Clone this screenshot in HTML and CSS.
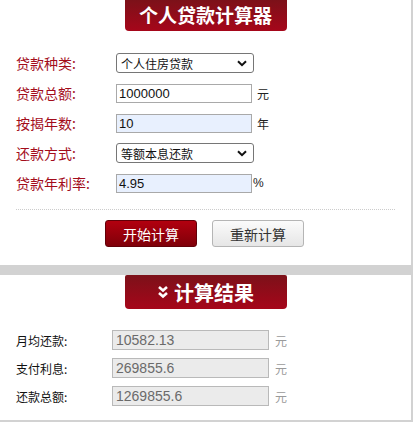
FILE: index.html
```html
<!DOCTYPE html>
<html lang="zh-CN">
<head>
  <meta charset="UTF-8" />
  <title>个人贷款计算器</title>
  <link rel="stylesheet" href="styles.css">
</head>
<body>
  <div class="panel calc">
    <div class="banner banner-top">个人贷款计算器</div>
    <div class="form">
      <div class="row">
        <label>贷款种类:</label>
        <div class="select-wrap">
          <select><option>个人住房贷款</option></select>
          <svg class="chev" viewBox="0 0 10 7" width="10" height="7"><path d="M1 1.2 5 5.2 9 1.2" fill="none" stroke="#111" stroke-width="2"/></svg>
        </div>
      </div>
      <div class="row">
        <label>贷款总额:</label>
        <input class="field" type="text" value="1000000">
        <span class="unit">元</span>
      </div>
      <div class="row">
        <label>按揭年数:</label>
        <input class="field filled" type="text" value="10">
        <span class="unit">年</span>
      </div>
      <div class="row">
        <label>还款方式:</label>
        <div class="select-wrap">
          <select><option>等额本息还款</option></select>
          <svg class="chev" viewBox="0 0 10 7" width="10" height="7"><path d="M1 1.2 5 5.2 9 1.2" fill="none" stroke="#111" stroke-width="2"/></svg>
        </div>
      </div>
      <div class="row">
        <label>贷款年利率:</label>
        <input class="field filled" type="text" value="4.95">
        <span class="unit pct">%</span>
      </div>
    </div>
    <div class="actions">
      <button class="btn btn-red">开始计算</button>
      <button class="btn btn-gray">重新计算</button>
    </div>
  </div>

  <div class="panel result">
    <div class="banner banner-result">
      <svg class="dchev" viewBox="0 0 12 14" width="12" height="14"><path d="M2 2 6 5.5 10 2M2 8 6 11.5 10 8" fill="none" stroke="#fff" stroke-width="2.6"/></svg>计算结果
    </div>
    <div class="out">
      <div class="out-row">
        <span class="out-label">月均还款:</span>
        <input class="out-field" type="text" value="10582.13" readonly>
        <span class="out-unit">元</span>
      </div>
      <div class="out-row">
        <span class="out-label">支付利息:</span>
        <input class="out-field" type="text" value="269855.6" readonly>
        <span class="out-unit">元</span>
      </div>
      <div class="out-row">
        <span class="out-label">还款总额:</span>
        <input class="out-field" type="text" value="1269855.6" readonly>
        <span class="out-unit">元</span>
      </div>
    </div>
  </div>
</body>
</html>
```

FILE: styles.css
```css
:root {
  --red: #a30d1b;
  --dark-red: #8a0b14;
  --band: #d2d2d2;
}
* { box-sizing: border-box; }
html, body {
  margin: 0; padding: 0;
  background: var(--band);
  font-family: "Liberation Sans", "Noto Sans CJK SC", sans-serif;
}
body { width: 413px; height: 422px; overflow: hidden; }
.panel {
  background: #fff;
  width: 411px;
}
.calc { height: 265px; margin-bottom: 10px; }
.result { height: 145px; }

.banner {
  width: 162px; margin: 0 auto;
  background: linear-gradient(#7c1119, #a6061a);
  color: #fff; font-weight: bold;
  font-family: "Noto Sans CJK SC", sans-serif;
  text-align: center;
  border-radius: 0 0 4px 4px;
  display: flex; justify-content: center; align-items: center;
}
.banner-top { height: 31px; padding-bottom: 2px; font-size: 19px; }
.banner-result { height: 34px; gap: 5px; font-size: 20px; border-radius: 2px 2px 4px 4px; }

.form {
  padding: 22px 0 0 16px;
  display: flex; flex-direction: column; gap: 10px;
}
.row {
  display: flex; align-items: center; height: 20px;
}
.row label {
  width: 100px;
  color: var(--red); font-size: 14px;
  font-family: "Noto Sans CJK SC", sans-serif;
}
.select-wrap { position: relative; width: 138px; height: 20px; }
.select-wrap select {
  appearance: none; -webkit-appearance: none;
  width: 100%; height: 100%;
  border: 1px solid #767676; border-radius: 3px;
  background: #fff; color: #111;
  font-size: 12px; padding: 0 4px;
  font-family: "Noto Sans CJK SC", sans-serif;
}
.chev { position: absolute; right: 7px; top: 7px; pointer-events: none; }
.field {
  width: 136px; height: 19px;
  border: 1px solid #a9a9a9; border-radius: 0;
  padding: 0 2px; font-size: 13px; color: #111;
  font-family: "Liberation Sans", sans-serif;
  background: #fff;
}
.field.filled { background: #e8f0fe; }
.unit {
  margin-left: 5px; font-size: 12px; color: #222;
  font-family: "Noto Sans CJK SC", sans-serif;
}
.unit.pct { margin-left: 1px; font-family: "Liberation Sans", sans-serif; }

.actions {
  margin: 16px 16px 0;
  border-top: 1px dotted #ccc;
  padding: 10px 0 0 89px;
  width: 379px;
  display: flex; gap: 15px;
}
.btn {
  width: 92px; height: 27px;
  font-size: 14px; border-radius: 3px; cursor: pointer;
  font-family: "Noto Sans CJK SC", sans-serif;
}
.btn-red {
  background: linear-gradient(#b2000f, #7f0009);
  border: 1px solid #620008; color: #fff;
}
.btn-gray {
  background: linear-gradient(#fbfbfb, #e6e6e6);
  border: 1px solid #b5b5b5; color: #333;
}

.out {
  padding: 21px 0 0 16px;
  display: flex; flex-direction: column; gap: 8px;
}
.out-row { display: flex; align-items: center; height: 20px; }
.out-label {
  width: 96px; font-size: 12px; color: #111;
  font-family: "Noto Sans CJK SC", sans-serif;
}
.out-field {
  width: 157px; height: 20px;
  border: 1px solid #b9b9b9; background: #ebebeb;
  color: #6a6a6a; font-size: 14px; padding: 0 3px;
  font-family: "Liberation Sans", sans-serif;
}
.out-unit {
  margin-left: 6px; font-size: 12px; color: #9a9a9a;
  font-family: "Noto Sans CJK SC", sans-serif;
}
```
